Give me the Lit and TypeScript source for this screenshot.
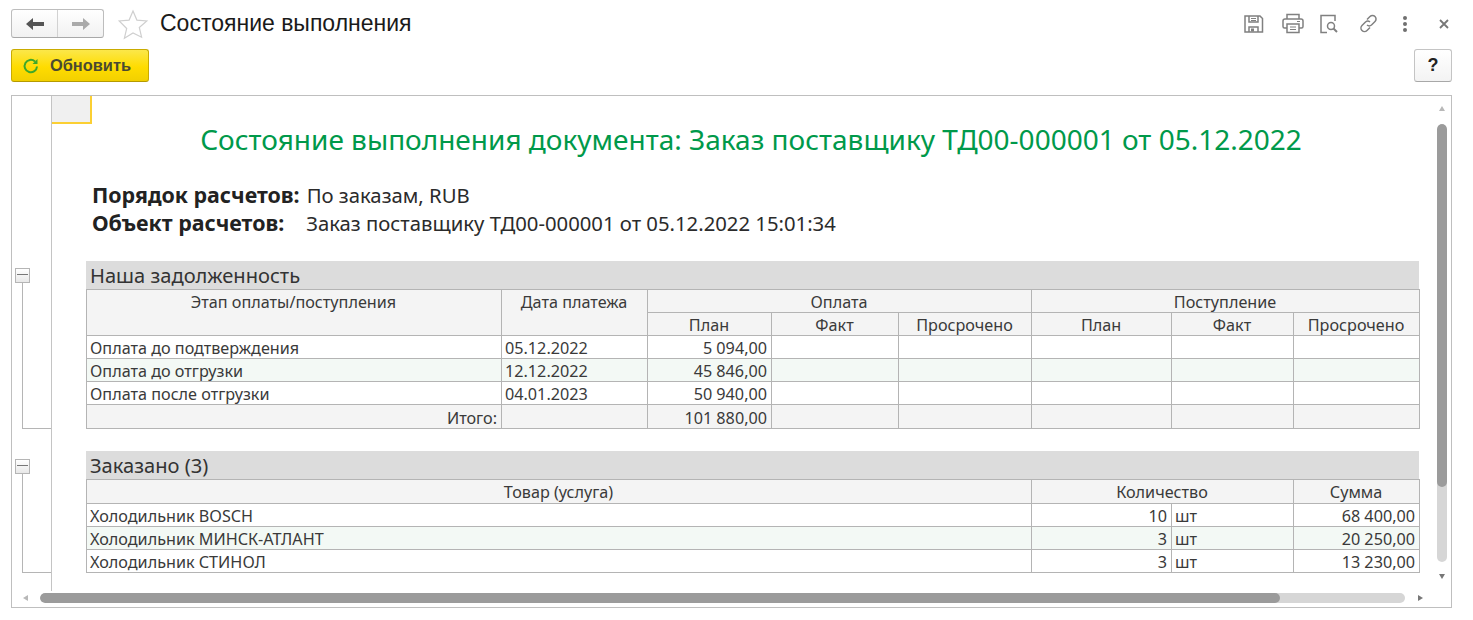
import { LitElement, html, css } from "lit";
import { customElement } from "lit/decorators.js";

const payRows = [
  ["Оплата до подтверждения", "05.12.2022", "5 094,00"],
  ["Оплата до отгрузки", "12.12.2022", "45 846,00"],
  ["Оплата после отгрузки", "04.01.2023", "50 940,00"],
];
const orderRows = [
  ["Холодильник BOSCH", "10", "шт", "68 400,00"],
  ["Холодильник МИНСК-АТЛАНТ", "3", "шт", "20 250,00"],
  ["Холодильник СТИНОЛ", "3", "шт", "13 230,00"],
];
const payCols = [415, 146, 124, 127, 133, 140, 122, 126];
const orderCols = [945, 140, 122, 126];

@customElement("app-root")
export class AppRoot extends LitElement {
  static styles = css`
    :host { display: block; width: 1473px; height: 620px; overflow: hidden; background: #fff; font-family: "Noto Sans", "Liberation Sans", sans-serif; color: #333; }
    .page { display: flex; flex-direction: column; height: 620px; padding: 9px 21px 12px 11px; box-sizing: border-box; }
    .top { display: flex; align-items: center; height: 29px; }
    .nav { display: flex; width: 93px; height: 29px; box-sizing: border-box; border: 1px solid #bdbdbd; border-bottom-color: #a8a8a8; border-radius: 3px; background: linear-gradient(#fff, #f1f1f1); }
    .nav div { flex: 1; display: flex; align-items: center; justify-content: center; }
    .nav div + div { border-left: 1px solid #d2d2d2; }
    .star { margin-left: 13px; width: 32px; height: 32px; }
    .title { margin-left: 11px; font: 23px/29px "Liberation Sans", sans-serif; color: #1a1a1a; }
    .tools { margin-left: auto; display: flex; align-items: center; color: #777; padding-right: 2px; }
    .tools svg { display: block; }
    .t2 { margin-left: 18px; }
    .t3 { margin-left: 15px; }
    .t4 { margin-left: 19px; }
    .t5 { margin-left: 23px; }
    .t6 { margin-left: 30px; }
    .bar { display: flex; justify-content: space-between; margin-top: 11px; height: 33px; }
    .refresh { display: flex; align-items: center; gap: 10px; width: 138px; box-sizing: border-box; padding-left: 10px; border: 1px solid #c9ab00; border-bottom-color: #b59a00; border-radius: 3px; background: linear-gradient(#fbe74a, #ffdc00 55%, #f2d000); font: bold 16.4px "Liberation Sans", sans-serif; color: #4a4a32; }
    .help { width: 38px; box-sizing: border-box; display: flex; align-items: center; justify-content: center; border: 1px solid #c4c4c4; border-bottom-color: #a8a8a8; border-radius: 3px; background: linear-gradient(#fff, #f3f3f3); font: bold 18px "Liberation Sans", sans-serif; color: #222; }
    .frame { position: relative; margin-top: 13px; flex: 1; border: 1px solid #bfbfbf; overflow: hidden; display: flex; }
    .gutter { position: relative; width: 39px; flex: none; border-right: 1px solid #c4c4c4; height: 495px; }
    .group { position: absolute; left: 3px; width: 36px; }
    .group i { position: absolute; left: 0; top: 0; width: 15px; height: 15px; box-sizing: border-box; border: 1px solid #b5b5b5; background: linear-gradient(#fff, #e8e8e8); }
    .group i::after { content: ""; position: absolute; left: 1px; right: 1px; top: 5px; height: 1px; background: #777; }
    .group b { position: absolute; left: 7px; top: 14px; bottom: 0; right: 0; border-left: 1px solid #b5b5b5; border-bottom: 1px solid #b5b5b5; }
    .g1 { top: 172px; height: 161px; }
    .g2 { top: 363px; height: 114px; }
    .sheet { flex: 1; min-width: 0; }
    .corner { width: 40px; height: 28px; background: #f0f0f0; border-right: 2px solid #fbcf33; border-bottom: 2px solid #fbcf33; box-sizing: border-box; }
    h1 { margin: 0; width: 1398px; text-align: center; font-weight: 400; font-size: 28px; line-height: 31px; color: #00994a; }
    .meta { margin: 26px 0 0 40px; font-size: 20.3px; line-height: 28px; color: #2b2b2b; }
    .meta div { display: flex; white-space: nowrap; }
    .meta b { font-weight: 700; font-size: 21.4px; color: #222; }
    .meta .k1 { margin-right: 7px; }
    .meta .k2 { margin-right: 22px; }
    .report { margin: 24px 0 0 34px; width: 1333px; }
    .report + .report { margin-top: 22px; }
    .caption { height: 28px; box-sizing: border-box; background: #dcdcdc; padding-left: 4px; font-size: 20.1px; line-height: 29px; color: #333; }
    table { border-collapse: collapse; table-layout: fixed; width: 1333px; font-size: 16.2px; color: #3a3a3a; }
    td, th { border: 1px solid #b4b4b4; padding: 2px 4px 0 3px; height: 23px; line-height: 20px; font-weight: 400; box-sizing: border-box; white-space: nowrap; overflow: hidden; }
    th { background: #f4f4f4; text-align: center; vertical-align: top; }
    .tall td, .tall th { height: 24px; }
    .alt td { background: #f3f9f5; }
    .total td { background: #f4f4f4; }
    .r { text-align: right; }
    .vbar { position: absolute; right: 4px; top: 28px; width: 10px; height: 438px; border-radius: 5px; background: #d6d6d6; overflow: hidden; }
    .vbar::before { content: ""; display: block; height: 363px; background: #9b9b9b; border-radius: 5px; }
    .hbar { position: absolute; left: 28px; top: 497px; width: 1365px; height: 10px; border-radius: 5px; background: #d6d6d6; overflow: hidden; }
    .hbar::before { content: ""; display: block; width: 1240px; height: 10px; background: #9b9b9b; border-radius: 5px; }
    .ar { position: absolute; width: 0; height: 0; border: 3px solid transparent; }
    .up { left: 1427px; top: 10px; border-bottom: 5px solid #b8b8b8; border-top-width: 0; }
    .dn { left: 1427px; top: 478px; border-top: 5px solid #777; border-bottom-width: 0; }
    .lf { left: 11px; top: 499px; border-right: 5px solid #b8b8b8; border-left-width: 0; }
    .rt { left: 1406px; top: 499px; border-left: 5px solid #777; border-right-width: 0; }
  `;

  private colgroup(cols: number[]) {
    return html`<colgroup>${cols.map((w) => html`<col style="width:${w}px" />`)}</colgroup>`;
  }

  render() {
    return html`<div class="page">
      <div class="top">
        <div class="nav">
          <div><svg width="20" height="14" viewBox="0 0 20 14"><path d="M1 7l7-6v4h11v4H8v4z" fill="#555"/></svg></div>
          <div><svg width="20" height="14" viewBox="0 0 20 14"><path d="M19 7l-7-6v4H1v4h11v4z" fill="#aaa"/></svg></div>
        </div>
        <svg class="star" viewBox="0 0 32 32"><path d="M16 3l3.900 9.100 9.900.9-7.500 6.500 2.300 9.700L16 25l-8.600 5.200 2.300-9.700L2.200 13l9.900-.9z" fill="#fff" stroke="#cfcfcf" stroke-width="1.200"/></svg>
        <div class="title">Состояние выполнения</div>
        <div class="tools">
          <svg width="21" height="20" viewBox="0 0 21 20" fill="none" stroke="#808080" stroke-width="1.500"><path d="M2 2h15l2.500 2.500V18H2z"/><path d="M6 2v6h9V2M6 18v-5h9v5"/><path d="M8 4.500h5M8 6.500h5" stroke-width="1"/><rect x="8" y="14.500" width="3" height="3" fill="#808080" stroke="none"/></svg>
          <svg class="t2" width="22" height="21" viewBox="0 0 22 21" fill="none" stroke="#808080" stroke-width="1.500"><path d="M5 6V1.500h12V6"/><path d="M5 15H2.500A1.500 1.500 0 0 1 1 13.500V8a2 2 0 0 1 2-2h16a2 2 0 0 1 2 2v5.500A1.500 1.500 0 0 1 19.500 15H17"/><path d="M5 11h12v8.500H5z"/><path d="M8 14h6M8 16.500h6" stroke-width="1"/><path d="M15 8.500h3" stroke-width="1"/></svg>
          <svg class="t3" width="20" height="20" viewBox="0 0 20 20" fill="none" stroke="#808080" stroke-width="1.500"><path d="M8 18.500H2V1.500h14V7"/><circle cx="12" cy="12" r="3.500"/><path d="M14.500 14.500l3.500 3.500" stroke-width="2"/></svg>
          <svg class="t4" width="21" height="21" viewBox="0 0 21 21" fill="none" stroke="#808080" stroke-width="1.500"><path d="M9 6.500l3-3a3.500 3.500 0 0 1 5 5l-3.500 3.500a3.500 3.500 0 0 1-4.500 0"/><path d="M12 14.500l-3 3a3.500 3.500 0 0 1-5-5L7.500 9a3.500 3.500 0 0 1 4.500 0"/></svg>
          <svg class="t5" width="6" height="18" viewBox="0 0 6 18" fill="#707070"><circle cx="3" cy="3" r="2"/><circle cx="3" cy="9" r="2"/><circle cx="3" cy="15" r="2"/></svg>
          <svg class="t6" width="12" height="12" viewBox="0 0 12 12" stroke="#777" stroke-width="1.800"><path d="M2 2l8 8M10 2l-8 8"/></svg>
        </div>
      </div>
      <div class="bar">
        <div class="refresh">
          <svg width="18" height="18" viewBox="0 0 18 18" fill="none"><path d="M15 9.500a6.200 6.200 0 1 1-2-5" stroke="#3ea82a" stroke-width="2"/><path d="M15.500 2v5h-5z" fill="#3ea82a"/></svg>
          <span>Обновить</span>
        </div>
        <div class="help">?</div>
      </div>
      <div class="frame">
        <div class="gutter">
          <div class="group g1"><b></b><i></i></div>
          <div class="group g2"><b></b><i></i></div>
        </div>
        <div class="sheet">
          <div class="corner"></div>
          <h1>Состояние выполнения документа: Заказ поставщику ТД00-000001 от 05.12.2022</h1>
          <div class="meta">
            <div><b class="k1">Порядок расчетов:</b><span>По заказам, RUB</span></div>
            <div><b class="k2">Объект расчетов:</b><span>Заказ поставщику ТД00-000001 от 05.12.2022 15:01:34</span></div>
          </div>
          <div class="report">
            <div class="caption">Наша задолженность</div>
            <table>
              ${this.colgroup(payCols)}
              <tr><th rowspan="2">Этап оплаты/поступления</th><th rowspan="2">Дата платежа</th><th colspan="3">Оплата</th><th colspan="3">Поступление</th></tr>
              <tr><th>План</th><th>Факт</th><th>Просрочено</th><th>План</th><th>Факт</th><th>Просрочено</th></tr>
              ${payRows.map((r, i) => html`<tr class=${i === 1 ? "alt" : ""}><td>${r[0]}</td><td>${r[1]}</td><td class="r">${r[2]}</td><td></td><td></td><td></td><td></td><td></td></tr>`)}
              <tr class="total tall"><td class="r">Итого:</td><td></td><td class="r">101 880,00</td><td></td><td></td><td></td><td></td><td></td></tr>
            </table>
          </div>
          <div class="report">
            <div class="caption">Заказано (3)</div>
            <table>
              ${this.colgroup(orderCols)}
              <tr class="tall"><th>Товар (услуга)</th><th colspan="2">Количество</th><th>Сумма</th></tr>
              ${orderRows.map((r, i) => html`<tr class=${i === 1 ? "alt" : ""}><td>${r[0]}</td><td class="r">${r[1]}</td><td>${r[2]}</td><td class="r">${r[3]}</td></tr>`)}
            </table>
          </div>
        </div>
        <div class="vbar"></div><div class="hbar"></div>
        <span class="ar up"></span><span class="ar dn"></span><span class="ar lf"></span><span class="ar rt"></span>
      </div>
    </div>`;
  }
}
